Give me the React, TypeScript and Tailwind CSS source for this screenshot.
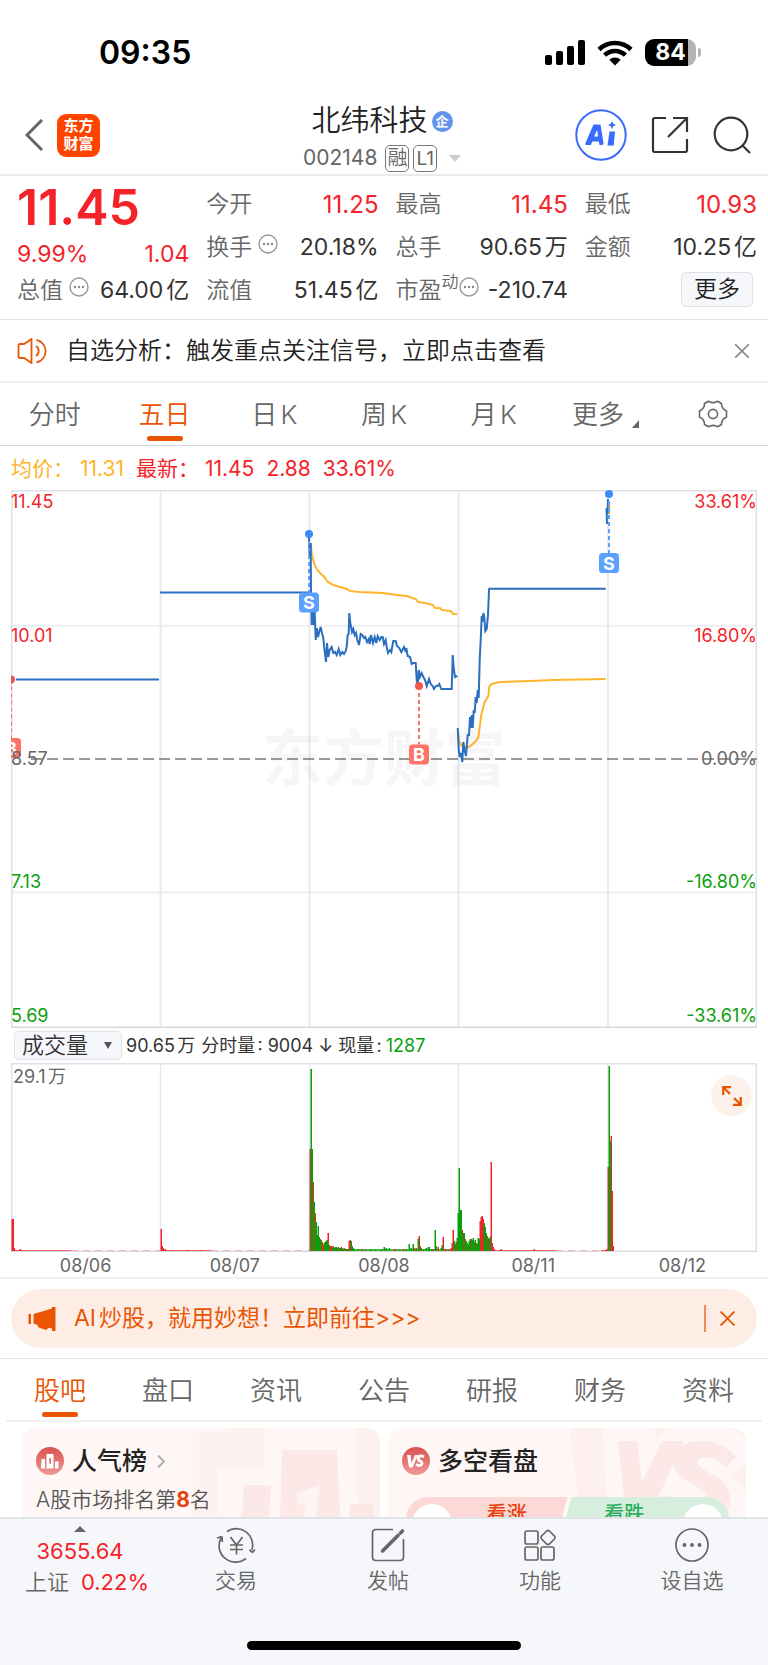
import * as React from "react";

type Tone = "up" | "flat";

type Quote = {
  label: string;
  value: string;
  tone: Tone;
  info?: boolean;
  sup?: string;
};

const quoteColumns: Quote[][] = [
  [
    { label: "今开", value: "11.25", tone: "up" },
    { label: "换手", value: "20.18%", tone: "flat", info: true },
    { label: "流值", value: "51.45亿", tone: "flat" },
  ],
  [
    { label: "最高", value: "11.45", tone: "up" },
    { label: "总手", value: "90.65万", tone: "flat" },
    { label: "市盈", value: "-210.74", tone: "flat", info: true, sup: "动" },
  ],
  [
    { label: "最低", value: "10.93", tone: "up" },
    { label: "金额", value: "10.25亿", tone: "flat" },
  ],
];

const periods = ["分时", "五日", "日K", "周K", "月K"];
const infoTabs = ["股吧", "盘口", "资讯", "公告", "研报", "财务", "资料"];
const dates = ["08/06", "08/07", "08/08", "08/11", "08/12"];

// Intraday price lines, one per trading day
const priceLines = [
  "5,189.5 148,189.5",
  "149,102.5 298,102.5",
  "298,48 298.7,67 299.7,53 300,103 300.7,135 301.7,121 302.7,135 303.7,122 304.7,150 306,138 307,147 308,143 309.7,137 311,143 312.3,148 313.3,158 315,172 316,153 317.3,167 318.7,160 320.7,157 322.3,163 324,162 325.7,165 327.7,159 329.3,165 331.3,162 333,164 334.7,161 335.7,157 336.7,145 337.7,144 338.3,123 339.3,133 341,142 342.3,139 343.7,145 345,143 346.3,150 348,155 349.7,144 351.3,145 353,148 354.3,147 356,152 357.7,149 358.7,154 360,145 362,153 363.7,147 365.3,153 366.7,146 368.7,150 370.3,147 371.7,147 373,154 374.7,150 375.7,157 377,163 379,160 380.3,162 382.3,151 384.7,151 386,156 388.3,158 390.3,162 393,157 394.7,162 395.3,158 396.7,166 399,167 400.7,174 402.3,173 404.7,173 405.7,190 406.7,195 407.7,180 409,187 410.7,183 412.3,187 414,190 415.7,196 418,189 419.7,194 421.7,196 423,199 425,196 426.7,196 428.3,194 430.3,199 440.7,199 441.7,165 442.7,178 444,187 446.3,186",
  "446.7,238 447.7,260 448.7,267 450,263 451.3,272 452.3,252 453.7,261 455,266 456.7,245 458,245 459,227 460,238 460.7,225 461.7,238 462.7,220 463.7,223 464.7,207 465.7,213 466.7,200 467.7,208 468.7,170 469.7,150 470.7,126 471.3,132 472.3,123 473.3,127 474.3,141 475.7,139 477,125 478,100 478.3,98.7 594.7,98.7",
  "597,9 596.5,24 595.5,18 596,34",
];

const averageLines = [
  "299.7,53 301,65 303,73 305.7,79 309,83 313.3,87 316.7,92 322.3,95 329,97 335.7,99 339,101 349,102 372,103 385.7,105 395.7,106 404.7,109 407.3,112 414,113 421.7,115 424,118 429,118 431,120 439.7,121 442.3,124 446.3,124.3",
  "447,240 448.3,252 450.7,256 454,257.3 458,257 463,253 467.3,248 468.7,237 470.3,225 473.3,213 477.3,206 478.3,197 480.7,194 489,192 519,191 542,190 594.7,189",
  "598.5,15 598,24",
];

// [x, height]
const redBars: [number, number][] = [
  [1, 32], [2, 32], [3, 3], [5, 1], [9, 2],
  [150, 22], [151, 5], [152, 3], [154, 2], [160, 1], [175, 1], [177, 1], [189, 1],
  [299, 102], [302, 69], [304, 38], [309, 12], [311, 9], [312, 6], [317, 18], [319, 5], [320, 5], [322, 5],
  [326, 3], [328, 3], [330, 4], [333, 3], [336, 2], [338, 10], [339, 11], [351, 2], [384, 2], [392, 2],
  [403, 3], [408, 15], [409, 5], [422, 2], [427, 4], [432, 14], [434, 2], [437, 2], [440, 3], [441, 8], [442, 21],
  [445, 9], [451, 21], [454, 12], [460, 12], [463, 9], [469, 30], [470, 34], [471, 35], [472, 32], [476, 15],
  [478, 12], [480, 89], [481, 8], [482, 4], [483, 2], [490, 2], [523, 2],
  [595, 1], [596, 2], [597, 84], [600, 115], [601, 60], [602, 5],
];

const greenBars: [number, number][] = [
  [300, 182], [301, 102], [303, 49], [305, 29], [306, 16], [307, 25], [308, 14], [310, 11], [313, 8], [314, 9],
  [315, 10], [316, 11], [318, 6], [321, 4], [323, 3], [324, 4], [325, 4], [327, 4], [329, 3], [331, 3], [332, 2],
  [334, 2], [335, 2], [337, 2], [340, 10], [341, 5], [342, 3], [343, 2], [347, 2], [354, 1], [359, 2], [364, 1],
  [370, 2], [373, 4], [375, 3], [378, 3], [388, 1], [395, 2], [398, 7], [400, 3], [402, 7], [405, 3], [407, 12],
  [410, 3], [412, 2], [415, 3], [417, 4], [418, 4], [420, 2], [424, 21], [425, 5], [430, 3], [431, 6], [443, 10],
  [444, 7], [446, 13], [447, 38], [448, 83], [449, 41], [450, 41], [452, 18], [453, 18], [455, 10], [456, 8],
  [457, 6], [458, 10], [459, 12], [461, 11], [462, 13], [464, 11], [465, 8], [466, 7], [467, 13], [468, 12],
  [473, 28], [474, 24], [475, 18], [477, 13], [479, 14], [598, 185], [599, 110],
];

const dayLines = [149.5, 298.5, 447.5, 597];

function InfoDot() {
  return (
    <svg viewBox="0 0 20 20" className="h-5 w-5 shrink-0" fill="none">
      <circle cx="10" cy="10" r="9" stroke="#999" strokeWidth="1.4" />
      <circle cx="6" cy="10" r="1.2" fill="#888" />
      <circle cx="10" cy="10" r="1.2" fill="#888" />
      <circle cx="14" cy="10" r="1.2" fill="#888" />
    </svg>
  );
}

function QuoteRow({ quote }: { quote: Quote }) {
  return (
    <div className="flex h-[43px] items-center justify-between whitespace-nowrap">
      <dt className="flex items-center text-[23px] font-[350] text-[#666]">
        {quote.label}
        {quote.sup && <sup className="text-[17px]">{quote.sup}</sup>}
        {quote.info && (
          <span className={quote.sup ? "mb-2" : "mb-2 ml-1.5"}>
            <InfoDot />
          </span>
        )}
      </dt>
      <dd className={quote.tone === "up" ? "text-[24px] text-[#f4232a]" : "text-[23px] text-[#333]"}>
        {quote.value}
      </dd>
    </div>
  );
}

function StatusBar() {
  return (
    <div className="flex h-[95px] items-center justify-between pt-2.5 pr-[67px] pl-[99px]">
      <span className="text-[32px] font-semibold text-black">09:35</span>
      <div className="flex items-center gap-3">
        <svg viewBox="0 0 40 26" className="h-[26px] w-10">
          <rect x="0" y="15" width="7" height="10" rx="2" />
          <rect x="11" y="11" width="7" height="14" rx="2" />
          <rect x="22" y="6" width="7" height="19" rx="2" />
          <rect x="33" y="0" width="7" height="25" rx="2" />
        </svg>
        <svg viewBox="0 0 36 26" className="h-[26px] w-9" fill="none" stroke="#000" strokeWidth="4.6">
          <path d="M2 9.5 A23 23 0 0 1 34 9.5" />
          <path d="M7.6 15.2 A15 15 0 0 1 28.4 15.2" />
          <path d="M18 25.5 L12.3 19.8 A8 8 0 0 1 23.7 19.8 Z" fill="#000" stroke="none" />
        </svg>
        <div className="flex items-center gap-0.5">
          <div className="flex h-[27px] w-[51px] items-center justify-center overflow-hidden rounded-[9px] bg-gradient-to-r from-black from-[84%] to-[#b3b3b3] to-[84%] text-[23px] font-bold text-white">
            84
          </div>
          <span className="h-[9px] w-[3px] rounded-r-full bg-[#b3b3b3]" />
        </div>
      </div>
    </div>
  );
}

function Header() {
  return (
    <header className="grid h-[81px] grid-cols-[1fr_auto_1fr] items-center border-b-2 border-[#ebebec]">
      <div className="flex items-center gap-3.5 pl-[25px]">
        <button aria-label="返回">
          <svg viewBox="0 0 18 32" className="h-8 w-[18px]" fill="none" stroke="#666" strokeWidth="3">
            <path d="M17 1 L2 16 L17 31" />
          </svg>
        </button>
        <a
          href="#home"
          className="grid h-[43px] w-[43px] place-content-center rounded-[9px] bg-[#ff4400] text-center text-[15px] leading-[18px] font-bold text-white"
        >
          东方
          <br />
          财富
        </a>
      </div>

      <div className="flex flex-col items-center pt-[6px] pr-1">
        <h1 className="flex items-center gap-1 text-[29px] leading-[40px] font-[350] text-[#222]">
          北纬科技
          <span className="grid h-[21px] w-[21px] place-content-center rounded-full bg-[#6494ee] text-[13px] leading-none font-bold text-white">
            企
          </span>
        </h1>
        <button className="flex items-center gap-1 text-[21px] leading-[34px] text-[#666]">
          002148
          <span className="ml-1 rounded-[5px] border border-[#777] px-px text-[20px] leading-[25px] font-[350]">融</span>
          <span className="rounded-[5px] border border-[#777] px-0.5 text-[19px] leading-[25px]">L1</span>
          <svg viewBox="0 0 12 7" className="ml-2 h-[7px] w-3" fill="#ccc">
            <path d="M0 0 H12 L6 7 Z" />
          </svg>
        </button>
      </div>

      <div className="flex items-center justify-end gap-6 pr-[17px]">
        <button aria-label="AI">
          <svg viewBox="0 0 52 52" className="h-[52px] w-[52px]">
            <circle cx="26" cy="26" r="24.7" fill="#fff" stroke="#3a6bff" strokeWidth="2" />
            <path
              d="M10.500 34 L18.500 15.500 H25.500 L28.500 34 Q28.700 36 26.500 36 H24.500 L23.800 32.500 H17.300 L15.800 36 H12 Q9.800 36 10.500 34 Z M19 27.500 H23 L22.200 21 Z"
              fill="#3a6bff"
              fillRule="evenodd"
            />
            <path d="M34.500 22.500 H40 L38.700 36.500 H32.500 Z" fill="#3a6bff" />
            <path d="M37 12 L38.300 14.700 L41 16 L38.300 17.300 L37 20 L35.700 17.300 L33 16 L35.700 14.700 Z" fill="#3a6bff" />
          </svg>
        </button>
        <button aria-label="分享">
          <svg viewBox="0 0 38 38" className="h-[38px] w-[38px]" fill="none" stroke="#333" strokeWidth="2.2">
            <path d="M15 2 H4 Q2 2 2 4 V34 Q2 36 4 36 H34 Q36 36 36 34 V23" />
            <path d="M22 2 H36 V16 M36 2 L17 21" />
          </svg>
        </button>
        <button aria-label="搜索">
          <svg viewBox="0 0 38 38" className="h-[38px] w-[38px]" fill="none" stroke="#333" strokeWidth="2.2">
            <circle cx="18" cy="18" r="16.300" />
            <path d="M29 29 L37 37" />
          </svg>
        </button>
      </div>
    </header>
  );
}

function QuotePanel() {
  return (
    <section className="grid grid-cols-4 gap-x-[17px] border-b border-[#e3e4ea] pt-[7px] pr-[11px] pb-[7px] pl-[17px]">
      <div className="whitespace-nowrap">
        <div className="h-[57px] text-[50px] leading-[48px] font-semibold text-[#f4232a]">11.45</div>
        <div className="flex h-[29px] items-center justify-between text-[23px] text-[#f4232a]">
          <span>9.99%</span>
          <span>1.04</span>
        </div>
        <dl>
          <QuoteRow quote={{ label: "总值", value: "64.00亿", tone: "flat", info: true }} />
        </dl>
      </div>
      {quoteColumns.map((column) => (
        <dl key={column[0].label}>
          {column.map((quote) => (
            <QuoteRow key={quote.label} quote={quote} />
          ))}
          {column.length < 3 && (
            <div className="flex h-[41px] items-center justify-end pr-1">
              <button className="h-[35px] w-[72px] rounded-[5px] border border-[#dfe2e8] bg-[#f6f7fa] text-[23px] leading-none font-[350] text-[#222]">
                更多
              </button>
            </div>
          )}
        </dl>
      ))}
    </section>
  );
}

function Notice() {
  return (
    <section className="flex h-[63px] items-center border-b-2 border-[#efeff0] pr-[19px] pl-[17px]">
      <svg viewBox="0 0 32 26" className="h-[26px] w-8" fill="none" stroke="#ea5504" strokeWidth="1.8">
        <path d="M1.500 7.500 Q1.500 6 3 6 H7 L14.500 1 V25 L7 20 H3 Q1.500 20 1.500 18.500 Z" />
        <path d="M19 8 A6 6 0 0 1 19 18 M19.500 2 A11.500 11.500 0 0 1 19.500 24.500" />
      </svg>
      <a href="#signal" className="ml-[17px] flex-1 text-[24px] font-[350] text-[#222]">
        自选分析：触发重点关注信号，立即点击查看
      </a>
      <button aria-label="关闭">
        <svg viewBox="0 0 14 14" className="h-3.5 w-3.5" fill="none" stroke="#888" strokeWidth="1.6">
          <path d="M0 0 L14 14 M14 0 L0 14" />
        </svg>
      </button>
    </section>
  );
}

function PeriodTabs() {
  return (
    <nav className="grid h-[63px] grid-cols-7 border-b border-[#d6d7dc] text-[26px] font-[350] text-[#666]">
      {periods.map((period) => (
        <button key={period} className={period === "五日" ? "relative text-[#ea5504]" : "relative"}>
          {period}
          {period === "五日" && (
            <span className="absolute bottom-1 left-1/2 h-[5px] w-9 -translate-x-1/2 rounded-full bg-[#ea5504]" />
          )}
        </button>
      ))}
      <button className="flex items-center justify-center gap-2 pl-1">
        更多
        <svg viewBox="0 0 7 8" className="mt-5 h-2 w-[7px]" fill="#666">
          <path d="M7 0 V8 H0 Z" />
        </svg>
      </button>
      <button aria-label="设置" className="grid place-content-center">
        <svg viewBox="0 0 30 30" className="h-[30px] w-[30px]" fill="none" stroke="#666" strokeWidth="1.600">
          <path
            d="M10.500 2.200 Q15 5 19.500 2.200 L23.500 4.500 Q23.300 9.500 28.500 12 V18 Q23.300 20.500 23.500 25.500 L19.500 27.800 Q15 25 10.500 27.800 L6.500 25.500 Q6.700 20.500 1.500 18 V12 Q6.700 9.500 6.500 4.500 Z"
            strokeLinejoin="round"
          />
          <circle cx="15" cy="15" r="4.600" />
        </svg>
      </button>
    </nav>
  );
}

function Marker({ x, dot, box, kind }: { x: number; dot: number; box: number; kind: "S" | "B" }) {
  const color = kind === "S" ? "#5c9ffc" : "#fb7467";
  return (
    <g>
      <line x1={x} x2={x} y1={dot} y2={box - 10} stroke={color} strokeWidth="2" strokeDasharray="4 3" />
      <circle cx={x} cy={dot} r="4" fill={kind === "S" ? "#3d8bf8" : "#f0564a"} />
      <rect x={x - 10} y={box - 10} width="20" height="20" rx="3.500" fill={color} />
      <text x={x} y={box + 6.500} textAnchor="middle" fontSize="18" fontWeight="700" fill="#fff">
        {kind}
      </text>
    </g>
  );
}

function PriceChart() {
  return (
    <div className="relative mx-[11px] text-[18px] leading-5">
      <svg viewBox="0 0 746 538" className="block w-full">
        <g fill="none" stroke="#e6e8f1" strokeWidth="1.8">
          <path d="M0 135.700 H746 M0 402.500 H746" stroke="#efeff3" strokeWidth="2" />
          {dayLines.map((x) => (
            <line key={x} x1={x} x2={x} y1="2" y2="536" />
          ))}
          <path d="M0.750 538 V0.750 H745.250 V538" stroke="#dfe1e8" strokeWidth="1.5" />
          <path d="M0 537.250 H746" stroke="#d6d8e0" strokeWidth="1.5" />
        </g>
        <text x="373" y="291" textAnchor="middle" fontSize="61" fontWeight="700" fill="#000" opacity="0.03">
          东方财富
        </text>
        <line x1="20" x2="746" y1="269" y2="269" stroke="#777" strokeWidth="1.4" strokeDasharray="11 5" />
        {averageLines.map((points) => (
          <polyline key={points} points={points} fill="none" stroke="#fdb52c" strokeWidth="2" />
        ))}
        {priceLines.map((points) => (
          <polyline key={points} points={points} fill="none" stroke="#2b70bf" strokeWidth="2" />
        ))}
        <Marker x={0} dot={189.5} box={258} kind="B" />
        <Marker x={298} dot={44} box={112.5} kind="S" />
        <Marker x={408} dot={196} box={264.5} kind="B" />
        <Marker x={598} dot={4} box={73} kind="S" />
      </svg>

      {/* Axis labels */}
      <div className="absolute inset-0 flex justify-between">
        <div className="flex flex-col text-[#f4232a]">
          <span className="mt-0.5">11.45</span>
          <span className="mt-[114px]">10.01</span>
          <span className="mt-[103px] text-[#666]">8.57</span>
          <span className="mt-[103px] text-[#0a9f0a]">7.13</span>
          <span className="mt-[114px] text-[#0a9f0a]">5.69</span>
        </div>
        <div className="flex flex-col text-right text-[#f4232a]">
          <span className="mt-0.5">33.61%</span>
          <span className="mt-[114px]">16.80%</span>
          <span className="mt-[103px] text-[#666]">0.00%</span>
          <span className="mt-[103px] text-[#0a9f0a]">-16.80%</span>
          <span className="mt-[114px] text-[#0a9f0a]">-33.61%</span>
        </div>
      </div>
    </div>
  );
}

function VolumeChart() {
  return (
    <div className="border-b-2 border-[#efeff0]">
      <div className="flex h-[35px] items-center pl-3.5 text-[18px] whitespace-nowrap text-[#333]">
        <div className="relative mr-1">
          <select
            aria-label="指标"
            className="h-[29px] w-[108px] appearance-none rounded-[5px] border border-[#dfe2e8] bg-[#f6f7fa] pl-[7px] text-[22px] leading-none font-[350]"
          >
            <option>成交量</option>
          </select>
          <svg viewBox="0 0 8 7" className="pointer-events-none absolute top-[11px] right-2.5 h-[7px] w-2" fill="#555">
            <path d="M0 0 H8 L4 7 Z" />
          </svg>
        </div>
        <span>90.65万</span>
        <span className="ml-1.5">分时量: 9004 ↓ 现量:</span>
        <span className="ml-1 text-[#0a9f0a]">1287</span>
      </div>

      <div className="relative mx-[11px]">
        <svg viewBox="0 0 746 189" className="block w-full">
          <g fill="none" stroke="#e6e8f1" strokeWidth="1.5">
            {dayLines.map((x) => (
              <line key={x} x1={x} x2={x} y1="2" y2="188" />
            ))}
            <path d="M0.750 189 V0.750 H745.250 V189" stroke="#dfe1e8" />
            <path d="M0 188.500 H746" stroke="#d6d8e0" />
          </g>
          <path d="M3 187.500 H60 M150 187.500 H200 M440 187.500 H545 M590 187.500 H602" stroke="#f4232a" strokeWidth="1" opacity="0.7" />
          <path d="M60 187.500 H149 M200 187.500 H298 M545 187.500 H590" stroke="#f4232a" strokeWidth="1" opacity="0.3" strokeDasharray="7 5" />
          <path d="M318 187 H440" stroke="#0a9f0a" strokeWidth="1.500" />
          <g fill="#f4232a">
            {redBars.map(([x, height]) => (
              <rect key={x} x={x - 0.5} y={188 - height} width="1.5" height={height} />
            ))}
          </g>
          <g fill="#0a9f0a">
            {greenBars.map(([x, height]) => (
              <rect key={x} x={x - 0.5} y={188 - height} width="1.5" height={height} />
            ))}
          </g>
        </svg>
        <span className="absolute top-0 left-0.5 text-[18px] text-[#666]">29.1万</span>
        <button
          aria-label="全屏"
          className="absolute top-3 right-[5px] grid h-[41px] w-[41px] place-content-center rounded-full bg-[#fdf1ec]"
        >
          <svg viewBox="0 0 20 20" className="h-5 w-5" fill="none" stroke="#ea5504" strokeWidth="2.200">
            <path d="M1.200 9 V1.200 H9 M1.200 1.200 L8 8 M18.800 11 V18.800 H11 M18.800 18.800 L12 12" />
          </svg>
        </button>
      </div>

      <div className="mx-[11px] grid h-[25px] grid-cols-5 text-center text-[18px] leading-[27px] text-[#666]">
        {dates.map((date) => (
          <span key={date}>{date}</span>
        ))}
      </div>
    </div>
  );
}

function Banner() {
  return (
    <div className="border-b border-[#e8e8ea] px-[11px] py-2.5">
      <div className="flex h-[59px] items-center rounded-full bg-[#fdede4] pr-[22px] pl-[17px] text-[#ea5504]">
        <svg viewBox="0 0 28 24" className="h-6 w-7" fill="#ea5504">
          <path d="M0.500 7 H3 V17 H0.500 Z M5.500 7 L24 1.500 V0 H27.500 V24 H24 V21.500 L21 20.800 L18 23 L10.500 20.500 L9.500 18 L5.500 16.500 Z" />
        </svg>
        <a href="#ai" className="ml-[18px] flex-1 text-[23px] whitespace-nowrap">
          AI炒股，就用妙想！立即前往&gt;&gt;&gt;
        </a>
        <span className="mr-3.5 h-[27px] w-0.5 bg-[#f28a55]" />
        <button aria-label="关闭">
          <svg viewBox="0 0 15 15" className="h-[15px] w-[15px]" fill="none" stroke="#ea5504" strokeWidth="1.800">
            <path d="M0.500 0.500 L14.500 14.500 M14.500 0.500 L0.500 14.500" />
          </svg>
        </button>
      </div>
    </div>
  );
}

function InfoTabs() {
  return (
    <nav className="mx-1.5 grid h-[63px] grid-cols-7 border-b-2 border-[#f0f0f1] text-[26px] font-[350] text-[#666]">
      {infoTabs.map((tab) => (
        <button key={tab} className={tab === "股吧" ? "relative pt-0.5 text-[#ea5504]" : "relative pt-0.5"}>
          {tab}
          {tab === "股吧" && (
            <span className="absolute bottom-[3px] left-1/2 h-[5px] w-9 -translate-x-1/2 rounded-full bg-[#ea5504]" />
          )}
        </button>
      ))}
    </nav>
  );
}

function Cards() {
  return (
    <section className="grid h-[95px] grid-cols-2 gap-2 overflow-hidden px-[22px] pt-1.5">
      <article className="relative h-32 overflow-hidden rounded-[13px] bg-[#fef7f5] pt-4 pl-3.5">
        <svg viewBox="0 0 190 89" className="absolute top-0 right-0 h-[89px] w-[190px]">
          <path d="M3 4 H36 V0 H75 L73 42 H28 V89 H3 Z M165 0 H190 V89 H168 Z" fill="#fdf2f0" />
          <path d="M54 57 H81 L79 89 H52 Z M92 22 H147 L150 89 H90 Z M160 76 H183 L184 89 H159 Z" fill="#fce8e6" />
          <path d="M107 66 L130 56 L126 89 H114 L115 75 L108 77 Z" fill="#fef5f3" />
        </svg>
        <div className="relative">
          <h2 className="flex items-center text-[25px] leading-[34px] font-medium text-[#222]">
            <svg viewBox="0 0 28 28" className="mr-2 h-7 w-7">
              <defs>
                <linearGradient id="badge" x1="0" y1="0" x2="0" y2="1">
                  <stop offset="0" stopColor="#d9504e" />
                  <stop offset="1" stopColor="#ee9a96" />
                </linearGradient>
              </defs>
              <circle cx="14" cy="14" r="14" fill="url(#badge)" />
              <path d="M5.500 12 H9 V21.500 H5 Z M10.500 7 H17.500 V21.500 H10.500 Z M19 14.500 H22.500 V21.500 H19 Z" fill="#fff" />
              <path d="M13 11.500 L14.800 10.800 V17 H13.500 V12.500 H13 Z" fill="#dc5b58" />
            </svg>
            人气榜
            <svg viewBox="0 0 8 13" className="ml-2.5 h-[13px] w-2" fill="none" stroke="#aaa" strokeWidth="1.800">
              <path d="M1 0.500 L7 6.500 L1 12.500" />
            </svg>
          </h2>
          <p className="mt-1.5 text-[21px] leading-8 font-[350] text-[#555] [text-autospace:no-autospace]">
            A股市场排名第<b className="font-bold text-[#e8400c]">8</b>名
          </p>
        </div>
      </article>

      <article className="relative h-32 overflow-hidden rounded-[13px] bg-[#fef7f5] pt-4 pl-3.5">
        <svg viewBox="0 0 190 89" className="absolute top-0 right-0 h-[89px] w-[190px]">
          <path d="M14 0 H46 L52 89 H24 Z M92 0 H112 L101 9 Z M178 0 H190 V66 L176 48 L190 36 V12 Z" fill="#fdf0ee" />
          <path d="M62 13 H81 L86 54 L106 13 H128 L93 89 H70 Z" fill="#fce8e6" />
          <path d="M180 29 Q166 13 145 13 Q120 13 118 33 Q117 46 134 55 Q152 63 150 70 Q148 77 132 75 Q120 73 112 66 L104 82 Q110 89 120 89 H168 Q176 80 174 66 Q172 54 154 45 Q140 38 142 33 Q145 27 158 31 Q164 33 170 39 Z" fill="#fce8e6" />
        </svg>
        <div className="relative">
          <h2 className="flex items-center text-[25px] leading-[34px] font-medium text-[#222]">
            <svg viewBox="0 0 28 28" className="mr-2 h-7 w-7">
              <circle cx="14" cy="14" r="14" fill="url(#badge)" />
              <path d="M5 8 H8.500 L9.500 16 L13 8 H16 L10.500 20.500 H7 Z" fill="#fff" />
              <path d="M22 9.800 Q17 7.500 16.200 11 Q16 13.300 18.500 14.300 Q20.800 15.500 19.500 17.600 Q17.500 19.500 14 17.600" fill="none" stroke="#fff" strokeWidth="2.800" />
            </svg>
            多空看盘
          </h2>
          <div className="mt-[19px] mr-[17px] ml-1 grid h-11 grid-cols-2 overflow-hidden rounded-full text-[20px] leading-6 font-medium">
            <button className="relative flex items-start justify-center bg-[#fcd9d6] pt-[5px] pl-10 text-[#e8400c] [clip-path:polygon(0_0,100%_0,calc(100%-12px)_100%,0_100%)]">
              <span className="absolute top-[7px] left-1.5 h-10 w-10 rounded-full bg-white" />
              看涨
            </button>
            <button className="relative -ml-2 flex items-start justify-center bg-[#d5eedd] pt-[5px] pr-10 text-[#2fae5d] [clip-path:polygon(12px_0,100%_0,100%_100%,0_100%)]">
              看跌
              <span className="absolute top-[7px] right-1.5 h-10 w-10 rounded-full bg-white" />
            </button>
          </div>
        </div>
      </article>
    </section>
  );
}

function TradeIcon() {
  return (
    <svg viewBox="0 0 40 36" className="h-9 w-10" fill="none" stroke="#666" strokeWidth="1.700">
      <path d="M11 4.500 A16.500 16.500 0 0 1 36 23 M36.500 25.500 L39 22.500 M36.500 25.500 L33.500 22.800" />
      <path d="M30 31.500 A16.500 16.500 0 0 1 5 11 M6 9.500 L1 11 M6 9.500 L6.300 15" />
      <path d="M14.500 10 L20.500 18 L26.500 10 M20.500 18 V27.500 M14 18 H27 M14 22.500 H27" />
    </svg>
  );
}

function PostIcon() {
  return (
    <svg viewBox="0 0 36 36" className="h-9 w-9" fill="none" stroke="#666" strokeWidth="1.700">
      <path d="M23 2.500 H6 Q2.500 2.500 2.500 6 V30 Q2.500 33.500 6 33.500 H30 Q33.500 33.500 33.500 30 V12" />
      <path d="M12.500 24 L28 8.500 M30.500 6 L32.500 4" strokeWidth="3.600" strokeLinecap="round" />
    </svg>
  );
}

function FeatureIcon() {
  return (
    <svg viewBox="0 0 36 36" className="h-9 w-9" fill="none" stroke="#666" strokeWidth="1.700">
      <rect x="3" y="4" width="13" height="13" rx="2" />
      <rect x="3" y="20" width="13" height="13" rx="2" />
      <rect x="19" y="20" width="13" height="13" rx="2" />
      <path d="M24.600 4 Q26 2.800 27.400 4 L32.600 9.200 Q33.600 10.500 32.600 11.800 L27.400 17 Q26 18 24.600 17 L19.400 11.800 Q18.400 10.500 19.400 9.200 Z" />
    </svg>
  );
}

function MoreIcon() {
  return (
    <svg viewBox="0 0 36 36" className="h-9 w-9" fill="#666">
      <circle cx="18" cy="18" r="16" fill="none" stroke="#666" strokeWidth="1.700" />
      <circle cx="10.500" cy="18" r="1.900" />
      <circle cx="18" cy="18" r="1.900" />
      <circle cx="25.500" cy="18" r="1.900" />
    </svg>
  );
}

const actions = [
  { label: "交易", Icon: TradeIcon },
  { label: "发帖", Icon: PostIcon },
  { label: "功能", Icon: FeatureIcon },
  { label: "设自选", Icon: MoreIcon },
];

function BottomBar() {
  return (
    <footer className="border-t-2 border-[#e1e3e7] bg-[#f6f7fa]">
      <div className="grid h-[122px] grid-cols-[160px_repeat(4,1fr)] items-start">
        <button className="flex flex-col items-center pt-[7px] text-[22px] whitespace-nowrap text-[#f4232a]">
          <svg viewBox="0 0 12 6" className="mb-1 h-1.5 w-3" fill="#666">
            <path d="M6 0 L12 6 H0 Z" />
          </svg>
          <span className="leading-[30px]">3655.64</span>
          <span className="flex gap-3 pl-3.5 leading-[32px]">
            <span className="font-[350] text-[#666]">上证</span>
            0.22%
          </span>
        </button>
        {actions.map(({ label, Icon }) => (
          <button key={label} className="flex flex-col items-center gap-0.5 pt-2 text-[21px] leading-8 font-[350] text-[#666]">
            <Icon />
            {label}
          </button>
        ))}
      </div>
      <div className="mx-auto h-[9px] w-[274px] rounded-full bg-black" />
      <div className="h-[17px]" />
    </footer>
  );
}

export default function App() {
  return (
    <main
      lang="zh-CN"
      className="w-full bg-white font-['Inter','Noto_Sans_CJK_SC',sans-serif] [text-autospace:normal]"
    >
      <StatusBar />
      <Header />
      <QuotePanel />
      <Notice />
      <PeriodTabs />

      {/* Average / latest price legend */}
      <div className="flex h-11 items-center gap-3 pt-px pl-[11px] text-[21px] whitespace-nowrap text-[#f4232a]">
        <span className="text-[#fdb52c]">均价： 11.31</span>
        <span>最新： 11.45</span>
        <span>2.88</span>
        <span>33.61%</span>
      </div>

      <PriceChart />
      <VolumeChart />
      <Banner />
      <InfoTabs />
      <Cards />
      <BottomBar />
    </main>
  );
}
